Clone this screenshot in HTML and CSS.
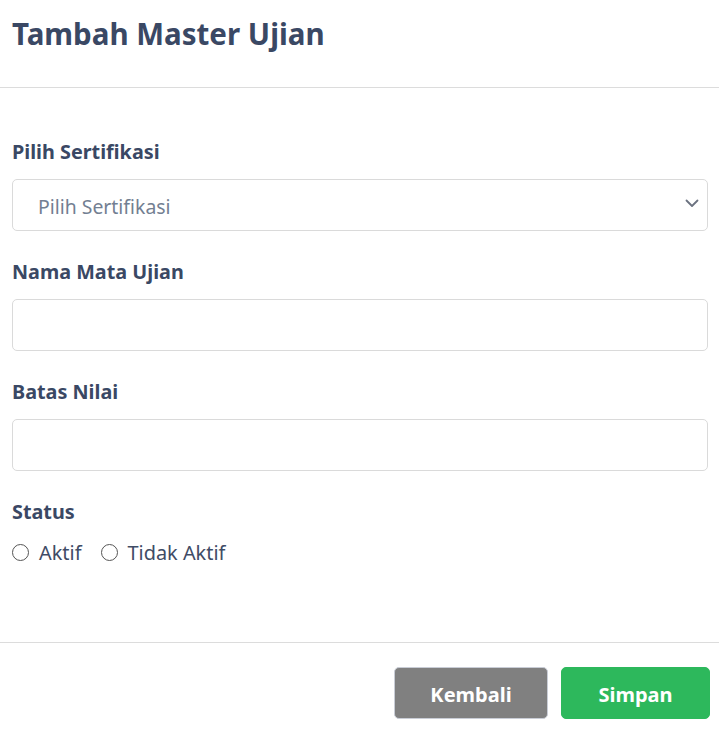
FILE: index.html
```html
<!DOCTYPE html>
<html lang="id">
<head>
<meta charset="utf-8">
<title>Tambah Master Ujian</title>
<link rel="stylesheet" href="styles.css">
</head>
<body>
<div class="modal">
  <header class="modal-header">
    <h1 class="title">Tambah Master Ujian</h1>
  </header>
  <form class="modal-body">
    <div class="field">
      <label class="label">Pilih Sertifikasi</label>
      <div class="select">
        <span class="placeholder">Pilih Sertifikasi</span>
        <svg class="chevron" width="14" height="9" viewBox="0 0 14 9"><path d="M1.5 1.5 L7 7 L12.5 1.5" fill="none" stroke="#6b7280" stroke-width="1.8" stroke-linecap="round" stroke-linejoin="round"/></svg>
      </div>
    </div>
    <div class="field">
      <label class="label">Nama Mata Ujian</label>
      <div class="input"></div>
    </div>
    <div class="field">
      <label class="label">Batas Nilai</label>
      <div class="input"></div>
    </div>
    <div class="field">
      <label class="label">Status</label>
      <div class="radios">
        <span class="radio"><span class="circle"></span>Aktif</span>
        <span class="radio"><span class="circle"></span>Tidak Aktif</span>
      </div>
    </div>
  </form>
  <footer class="modal-footer">
    <button class="btn btn-back">Kembali</button>
    <button class="btn btn-save">Simpan</button>
  </footer>
</div>
</body>
</html>
```
FILE: styles.css
```css
* { box-sizing: border-box; }
html, body { margin: 0; padding: 0; background: #fff; }
body {
  font-family: "Noto Sans", "Open Sans", sans-serif;
  color: #3a4864;
}
.modal { width: 719px; }
.modal-header {
  height: 88px;
  border-bottom: 1px solid #dcdcdc;
  padding: 14px 12px 0;
}
.title {
  margin: 0;
  font-size: 29.5px;
  font-weight: 700;
  line-height: 40px;
  color: #3a4864;
}
.modal-body {
  padding: 49px 11px 0 12px;
  height: 555px;
  border-bottom: 1px solid #dcdcdc;
}
.field { margin-bottom: 26px; }
.label {
  display: block;
  font-size: 19.8px;
  font-weight: 700;
  line-height: 30px;
  margin-bottom: 12px;
}
.select, .input {
  height: 52px;
  border: 1px solid #dadada;
  border-radius: 5px;
  background: #fff;
}
.select {
  display: flex;
  align-items: center;
  justify-content: space-between;
  padding: 0 8px 0 25px;
}
.placeholder {
  font-size: 19.4px;
  color: #737f92;
  padding-top: 3px;
}
.chevron { margin-top: -4px; }
.radios {
  display: flex;
  align-items: center;
  gap: 19px;
  margin-top: 5px;
}
.radio {
  display: flex;
  align-items: center;
  gap: 10px;
  font-size: 19.9px;
  color: #3f4c66;
}
.circle {
  width: 17px;
  height: 17px;
  border: 1.5px solid #555;
  border-radius: 50%;
}
.modal-footer {
  display: flex;
  justify-content: flex-end;
  gap: 13px;
  padding: 24px 9px 0 0;
}
.btn {
  height: 52px;
  border-radius: 5px;
  font-family: "Noto Sans", "Open Sans", sans-serif;
  font-size: 20px;
  font-weight: 700;
  color: #fff;
  cursor: pointer;
  padding: 2px 0 0;
}
.btn-back {
  width: 154px;
  background: #808080;
  border: 1px solid #c9cdd6;
}
.btn-save {
  width: 149px;
  background: #2db85c;
  border: 1px solid #2db85c;
}
```
